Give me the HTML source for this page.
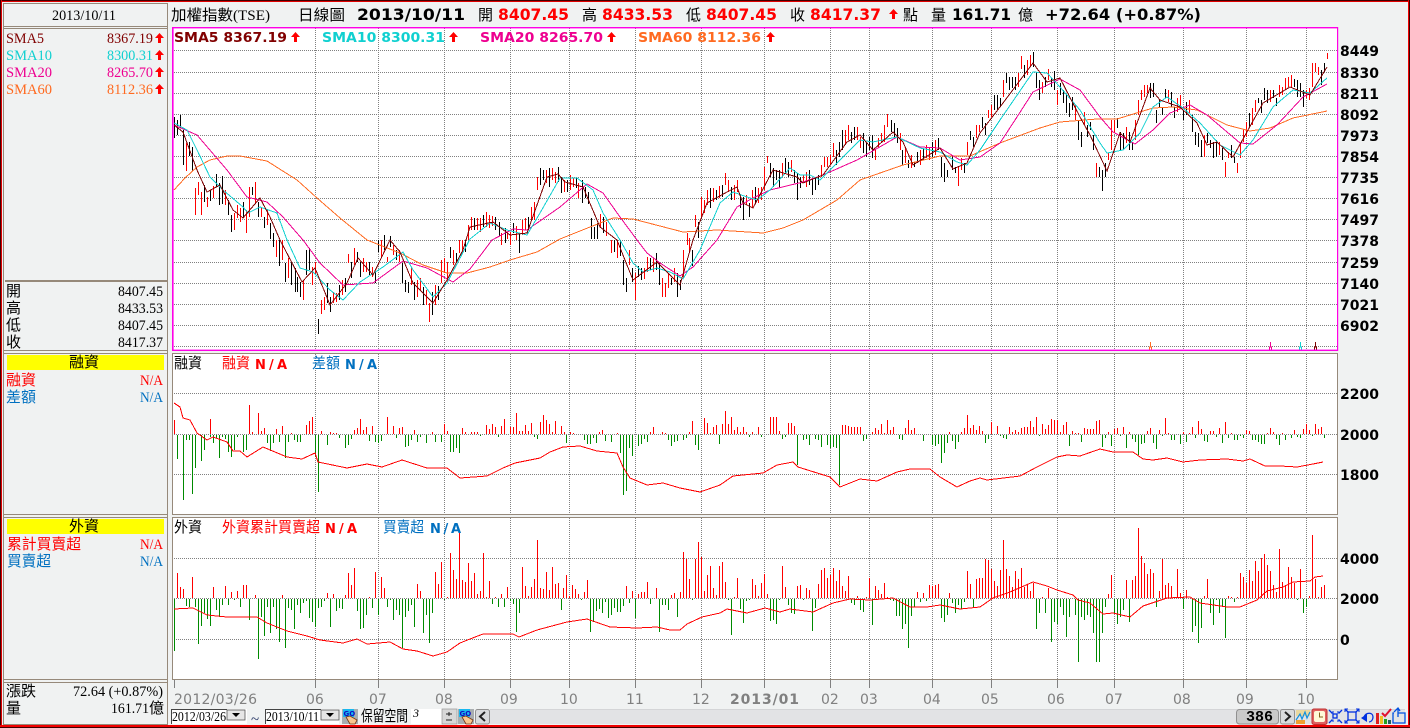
<!DOCTYPE html>
<html><head><meta charset="utf-8"><title>加權指數</title>
<style>
html,body{margin:0;padding:0;background:#f0f2f2;width:1410px;height:728px;overflow:hidden}
svg{display:block}
text{font-family:"Liberation Serif","Noto Sans CJK TC",serif;font-size:15px}
.c{font-family:"Liberation Sans","Noto Sans CJK TC",sans-serif;font-size:15px}
.b{font-family:"DejaVu Sans",sans-serif;font-weight:bold;font-size:16px}
.l{font-family:"DejaVu Sans",sans-serif;font-weight:bold;font-size:13px}
.y{font-family:"DejaVu Sans",sans-serif;font-weight:bold;font-size:14px;fill:#000}
.x{font-family:"DejaVu Sans",sans-serif;font-size:14px;fill:#808080}
.ln{fill:none;stroke-width:1;shape-rendering:crispEdges}
.t{fill:#96897a}
</style></head><body>
<svg xmlns="http://www.w3.org/2000/svg" width="1410" height="728" viewBox="0 0 1410 728">
<defs><path id="a" d="M4.5 0L9 5H6V10H3V5H0Z" fill="#ff0000"/>
<g id="go"><rect width="16" height="15" fill="#a8aeb0"/><rect x="1" y="0" width="11" height="8" fill="#18b8f0"/><text x="1.5" y="7" style="font-family:'DejaVu Sans',sans-serif;font-size:7px;font-weight:bold" fill="#1010c0">GO</text><path d="M4 8L8 7L15 11L13 15H8Z" fill="#f8c890" stroke="#703010" stroke-width=".8"/></g></defs>

<rect width="1410" height="728" fill="#f0f2f2"/>
<rect x="0" y="0" width="1410" height="1" fill="#400000"/><rect x="0" y="1" width="1410" height="1" fill="#e00000"/>
<rect x="0" y="0" width="1" height="728" fill="#400000"/><rect x="1" y="0" width="1" height="728" fill="#e00000"/>
<rect x="1409" y="0" width="1" height="728" fill="#400000"/><rect x="1408" y="0" width="1" height="728" fill="#f00000"/>
<rect x="0" y="727" width="1410" height="1" fill="#400000"/><rect x="0" y="725" width="1410" height="2" fill="#f00000"/>

<g class="t">
<rect x="3" y="3" width="165" height="1"/><rect x="3" y="3" width="1" height="722"/><rect x="167" y="3" width="1" height="722"/>
<rect x="3" y="26" width="165" height="1"/><rect x="3" y="28" width="165" height="1"/>
<rect x="5" y="280" width="162" height="2"/>
<rect x="3" y="350" width="165" height="1"/><rect x="3" y="353" width="165" height="1"/>
<rect x="3" y="514" width="165" height="1"/><rect x="3" y="517" width="165" height="1"/>
<rect x="3" y="679" width="165" height="1"/><rect x="3" y="682" width="165" height="1"/>
<rect x="3" y="724" width="165" height="1"/>
</g>

<text x="52" y="20" textLength="64" lengthAdjust="spacingAndGlyphs">2013/10/11</text>
<g fill="#800000"><text x="6" y="43" textLength="38" lengthAdjust="spacingAndGlyphs">SMA5</text><text x="107" y="43" textLength="46" lengthAdjust="spacingAndGlyphs">8367.19</text></g>
<g fill="#10d0d0"><text x="6" y="60" textLength="46" lengthAdjust="spacingAndGlyphs">SMA10</text><text x="107" y="60" textLength="46" lengthAdjust="spacingAndGlyphs">8300.31</text></g>
<g fill="#ee0090"><text x="6" y="77" textLength="46" lengthAdjust="spacingAndGlyphs">SMA20</text><text x="107" y="77" textLength="46" lengthAdjust="spacingAndGlyphs">8265.70</text></g>
<g fill="#ff6a20"><text x="6" y="94" textLength="46" lengthAdjust="spacingAndGlyphs">SMA60</text><text x="107" y="94" textLength="46" lengthAdjust="spacingAndGlyphs">8112.36</text></g>
<use href="#a" x="155" y="33"/><use href="#a" x="155" y="50"/><use href="#a" x="155" y="67"/><use href="#a" x="155" y="84"/>

<text class="c" x="6" y="296">開</text><text x="118" y="296" textLength="45" lengthAdjust="spacingAndGlyphs">8407.45</text>
<text class="c" x="6" y="313">高</text><text x="118" y="313" textLength="45" lengthAdjust="spacingAndGlyphs">8433.53</text>
<text class="c" x="6" y="330">低</text><text x="118" y="330" textLength="45" lengthAdjust="spacingAndGlyphs">8407.45</text>
<text class="c" x="6" y="347">收</text><text x="118" y="347" textLength="45" lengthAdjust="spacingAndGlyphs">8417.37</text>

<rect x="7" y="355" width="157" height="15" fill="#ffff00"/>
<text class="c" x="69" y="367">融資</text>
<text class="c" x="6" y="385" fill="#ff0000">融資</text><text x="140" y="385" textLength="23" lengthAdjust="spacingAndGlyphs" fill="#ff0000">N/A</text>
<text class="c" x="6" y="402" fill="#0070c0">差額</text><text x="140" y="402" textLength="23" lengthAdjust="spacingAndGlyphs" fill="#0070c0">N/A</text>

<rect x="7" y="519" width="157" height="15" fill="#ffff00"/>
<text class="c" x="69" y="531">外資</text>
<text class="c" x="7" y="549" fill="#ff0000" textLength="74" lengthAdjust="spacingAndGlyphs">累計買賣超</text><text x="140" y="549" textLength="23" lengthAdjust="spacingAndGlyphs" fill="#ff0000">N/A</text>
<text class="c" x="7" y="566" fill="#0070c0" textLength="44" lengthAdjust="spacingAndGlyphs">買賣超</text><text x="140" y="566" textLength="23" lengthAdjust="spacingAndGlyphs" fill="#0070c0">N/A</text>

<text class="c" x="6" y="696">漲跌</text><text x="73" y="696" textLength="90" lengthAdjust="spacingAndGlyphs">72.64 (+0.87%)</text>
<text class="c" x="6" y="713">量</text><text x="111" y="713" textLength="38" lengthAdjust="spacingAndGlyphs">161.71</text><text class="c" x="149" y="713">億</text>

<text class="c" x="171" y="20" textLength="62" lengthAdjust="spacingAndGlyphs">加權指數</text><text x="233" y="20" textLength="37" lengthAdjust="spacingAndGlyphs">(TSE)</text>
<text class="c" x="298" y="20" textLength="47" lengthAdjust="spacingAndGlyphs">日線圖</text>
<text class="b" x="357" y="20" textLength="108" lengthAdjust="spacingAndGlyphs">2013/10/11</text>
<text class="c" x="478" y="20">開</text><text class="b" x="498" y="20" textLength="71" lengthAdjust="spacingAndGlyphs" fill="#ff0000">8407.45</text>
<text class="c" x="582" y="20">高</text><text class="b" x="602" y="20" textLength="71" lengthAdjust="spacingAndGlyphs" fill="#ff0000">8433.53</text>
<text class="c" x="686" y="20">低</text><text class="b" x="706" y="20" textLength="71" lengthAdjust="spacingAndGlyphs" fill="#ff0000">8407.45</text>
<text class="c" x="790" y="20">收</text><text class="b" x="810" y="20" textLength="71" lengthAdjust="spacingAndGlyphs" fill="#ff0000">8417.37</text>
<use href="#a" x="889" y="9"/>
<text class="c" x="903" y="20">點</text><text class="c" x="931" y="20">量</text>
<text class="b" x="952" y="20" textLength="59" lengthAdjust="spacingAndGlyphs">161.71</text>
<text class="c" x="1018" y="20">億</text>
<text class="b" x="1045" y="20" textLength="156" lengthAdjust="spacingAndGlyphs">+72.64 (+0.87%)</text>

<rect x="172" y="27" width="1166" height="324" fill="#fff"/>
<rect x="172" y="353" width="1166" height="162" fill="#fff"/>
<rect x="172" y="517" width="1166" height="163" fill="#fff"/>

<path fill="none" stroke="#808080" stroke-width="1" stroke-dasharray="1 1" shape-rendering="crispEdges" d="M174 50.5H1337M174 72.5H1337M174 93.5H1337M174 114.5H1337M174 135.5H1337M174 156.5H1337M174 177.5H1337M174 198.5H1337M174 219.5H1337M174 240.5H1337M174 262.5H1337M174 283.5H1337M174 304.5H1337M174 325.5H1337M174 346.5H1337M174 393.5H1337M174 434.5H1337M174 474.5H1337M174 558.5H1337M174 598.5H1337M174 639.5H1337
M315.5 28V680M378.5 28V680M444.5 28V680M510.5 28V680M569.5 28V680M635.5 28V680M701.5 28V680M764.5 28V680M830.5 28V680M869.5 28V680M932.5 28V680M991.5 28V680M1057.5 28V680M1114.5 28V680M1183.5 28V680M1246.5 28V680M1306.5 28V680"/>
<path fill="none" stroke="#808080" shape-rendering="crispEdges" d="M174.5 680V688M315.5 680V688M378.5 680V688M444.5 680V688M510.5 680V688M569.5 680V688M635.5 680V688M701.5 680V688M764.5 680V688M830.5 680V688M869.5 680V688M932.5 680V688M991.5 680V688M1057.5 680V688M1114.5 680V688M1183.5 680V688M1246.5 680V688M1306.5 680V688"/>
<rect x="168" y="351" width="1170" height="2" fill="#f0f2f2"/><rect x="168" y="515" width="1170" height="2" fill="#f0f2f2"/>

<g transform="translate(.5 0)" fill="none" shape-rendering="crispEdges">
<!-- price bars: black -->
<path stroke="#000" d="M174 117V138M177 120V135M180 115V128M183 130V165M189 142V156M192 147V171M204 185V202M210 190V201M216 174V187M219 183V205M222 176V204M228 200V215M231 215V232M243 202V218M252 187V195M258 202V217M264 217V228M270 223V239M273 233V247M279 240V266M285 263V282M291 262V285M295 268V292M297 277V292M300 282V297M306 250V275M309 248V270M318 319V334M327 283V303M330 297V312M339 285V300M345 278V292M351 262V278M357 252V262M360 262V277M369 262V275M375 272V283M378 240V252M384 235V250M390 236V247M396 250V260M402 263V283M405 280V292M408 282V293M414 282V300M423 287V305M432 292V315M438 286V300M450 247V258M456 253V263M465 240V252M474 218V230M483 215V227M495 217V230M499 222V236M505 228V243M513 223V233M519 233V253M528 217V230M540 168V185M543 170V180M549 168V187M558 167V182M561 177V193M567 180V192M576 178V188M582 180V203M585 187V198M588 192V204M591 218V239M594 227V239M597 223V239M603 217V233M614 240V252M620 240V256M623 260V285M626 278V292M632 268V282M638 266V277M641 268V280M650 258V270M656 253V270M659 262V285M671 278V285M677 273V297M680 280V290M692 250V266M698 222V238M710 188V208M716 190V200M722 185V197M731 187V200M740 197V208M743 197V220M749 203V217M755 187V203M770 163V177M773 168V187M776 170V180M779 170V188M785 158V173M788 162V177M794 170V183M797 173V200M800 177V188M809 170V185M812 178V195M815 177V190M818 175V185M836 150V165M839 142V157M842 130V150M851 132V143M854 127V140M863 133V153M866 143V157M869 137V150M872 135V158M891 120V132M894 123V137M897 128V143M902 150V165M908 160V168M914 162V167M917 152V163M923 148V160M932 142V157M938 138V150M941 157V177M944 163V182M947 170V177M952 155V170M955 167V173M964 163V173M970 131V140M973 137V147M982 117V128M985 123V135M994 95V110M997 95V110M1000 98V107M1006 73V83M1009 77V90M1012 77V88M1015 77V90M1024 65V78M1033 52V67M1036 72V88M1039 80V100M1045 77V87M1051 78V87M1054 71V90M1060 83V95M1063 90V103M1066 95V113M1069 103V117M1072 97V110M1078 120V140M1081 132V147M1087 125V137M1090 122V130M1093 135V150M1099 167V177M1102 170V191M1105 163V177M1117 118V128M1120 132V150M1123 133V150M1129 132V150M1132 142V150M1150 83V98M1153 83V97M1156 110V123M1159 100V107M1162 107V115M1165 89V98M1171 92V107M1174 107V118M1183 110V120M1186 102V115M1192 115V132M1195 132V145M1198 133V147M1201 140V157M1207 133V143M1210 140V148M1213 142V158M1216 140V157M1222 148V160M1231 145V158M1234 157V163M1249 113V128M1258 98V103M1261 100V113M1264 88V100M1267 90V103M1273 90V98M1276 98V106M1294 79V87M1297 80V97M1300 83V97M1303 90V107M1321 70V85M1324 63V72"/>
<!-- price bars: red -->
<path stroke="#f00" d="M186 143V171M195 188V215M198 182V195M201 192V215M207 197V207M213 186V198M225 190V205M234 213V230M237 205V218M240 208V222M246 210V233M249 187V217M255 182V203M261 207V217M267 210V225M276 240V257M282 240V260M288 258V278M303 280V300M312 267V285M315 262V275M321 300V314M324 297V310M333 292V303M336 293V302M342 280V295M348 254V263M354 248V265M363 258V272M366 262V272M372 267V277M381 240V258M387 257V262M393 245V255M399 250V262M411 268V285M417 280V297M420 278V290M426 290V305M429 303V322M435 285V305M441 260V283M444 258V273M447 262V282M453 250V265M459 240V253M462 240V252M468 225V240M471 217V230M477 218V230M480 218V232M486 212V227M489 215V228M492 216V226M501 233V245M507 233V239M510 232V245M516 226V240M522 220V235M525 218V230M531 207V220M534 202V220M537 177V190M546 170V183M552 168V180M555 172V183M564 180V192M570 175V190M573 178V187M578 183V198M600 214V228M606 222V236M611 240V253M617 240V258M629 250V265M635 273V300M644 268V279M647 257V272M653 258V272M662 278V297M665 283V297M668 273V288M674 268V282M683 250V278M687 233V245M689 238V252M695 215V227M701 197V217M704 200V213M707 190V205M713 188V202M719 186V198M725 173V185M728 180V192M734 185V200M737 180V192M746 195V205M752 190V208M758 188V203M761 187V200M764 167V190M767 156V163M782 163V177M791 160V172M803 175V183M806 172V187M821 165V177M824 157V167M827 157V167M830 155V165M833 143V157M845 130V145M848 125V140M857 127V140M860 137V148M875 150V160M878 138V148M881 133V142M884 125V142M887 114V127M900 133V150M905 148V163M911 155V168M920 150V165M926 145V158M929 147V160M935 140V155M958 167V186M961 158V170M967 142V155M976 125V138M979 125V132M988 110V118M991 105V117M1003 80V97M1018 73V87M1021 56V69M1027 60V75M1030 55V67M1042 82V93M1048 69V80M1057 90V105M1075 105V120M1084 112V125M1096 163V177M1108 153V160M1111 120V150M1114 120V133M1126 127V143M1135 120V140M1138 100V115M1141 90V100M1144 85V97M1147 85V93M1168 90V102M1177 98V112M1180 95V108M1189 100V113M1204 135V157M1219 142V155M1225 162V177M1228 152V158M1237 163V173M1240 143V158M1243 130V142M1246 122V137M1252 108V125M1255 100V112M1270 90V102M1279 85V97M1282 87V95M1285 78V90M1288 77V87M1291 75V87M1306 90V98M1309 88V100M1312 63V87M1315 63V72M1318 67V75M1327 53V59"/>
<!-- panel 2 -->
<path stroke="#f00" d="M174 434V420M210 434V419M249 434V405M252 434V432M258 434V413M261 434V431M264 434V428M276 434V429M282 434V426M291 434V433M306 434V425M309 434V421M312 434V417M321 434V431M330 434V432M333 434V433M336 434V433M354 434V430M357 434V428M360 434V419M363 434V430M366 434V427M372 434V426M387 434V417M393 434V426M399 434V428M402 434V427M414 434V430M432 434V432M444 434V424M447 434V431M462 434V428M465 434V432M471 434V432M474 434V432M477 434V432M486 434V425M489 434V429M492 434V424M495 434V427M501 434V426M504 434V419M510 434V427M513 434V427M516 434V413M519 434V431M522 434V431M525 434V425M528 434V431M531 434V423M540 434V422M543 434V415M546 434V420M549 434V424M552 434V432M555 434V421M561 434V426M564 434V432M570 434V432M573 434V433M599 434V432M602 434V430M617 434V433M650 434V432M653 434V427M662 434V432M665 434V433M689 434V432M692 434V421M704 434V418M707 434V423M710 434V433M713 434V427M716 434V425M722 434V424M725 434V411M728 434V424M731 434V417M734 434V430M737 434V427M740 434V432M743 434V427M746 434V432M752 434V432M758 434V427M770 434V417M773 434V417M776 434V417M779 434V431M788 434V423M791 434V423M794 434V426M842 434V425M845 434V425M848 434V426M851 434V427M854 434V427M857 434V427M860 434V427M872 434V432M875 434V428M878 434V430M881 434V424M884 434V433M887 434V420M890 434V430M893 434V427M905 434V428M908 434V420M911 434V430M914 434V428M949 434V432M961 434V432M964 434V428M967 434V415M970 434V428M973 434V425M976 434V430M979 434V426M982 434V431M991 434V422M997 434V426M1009 434V427M1012 434V432M1015 434V430M1018 434V432M1021 434V428M1024 434V427M1027 434V427M1030 434V421M1033 434V427M1036 434V417M1042 434V424M1045 434V429M1048 434V425M1051 434V419M1054 434V420M1057 434V420M1060 434V432M1063 434V425M1066 434V422M1072 434V431M1075 434V433M1078 434V433M1084 434V428M1087 434V429M1090 434V429M1093 434V429M1096 434V421M1099 434V420M1108 434V432M1114 434V429M1117 434V428M1123 434V427M1129 434V432M1147 434V431M1150 434V428M1159 434V430M1165 434V418M1168 434V433M1183 434V432M1189 434V433M1192 434V427M1198 434V421M1201 434V429M1210 434V431M1213 434V431M1219 434V428M1225 434V422M1231 434V433M1246 434V430M1249 434V431M1267 434V433M1270 434V428M1273 434V432M1282 434V433M1294 434V430M1303 434V429M1306 434V424M1309 434V430M1315 434V424M1318 434V429M1321 434V427"/>
<path stroke="#008a00" d="M177 435V459M183 435V500M186 435V440M189 435V440M192 435V494M195 435V468M201 435V461M204 435V450M210 435V437M213 435V443M216 435V438M219 435V458M222 435V437M225 435V439M228 435V452M231 435V457M234 435V450M237 435V437M243 435V452M246 435V450M267 435V443M270 435V451M273 435V443M279 435V442M285 435V458M288 435V442M294 435V440M297 435V442M300 435V442M315 435V457M318 435V492M327 435V445M339 435V438M345 435V448M348 435V445M351 435V439M369 435V441M375 435V442M378 435V443M381 435V441M396 435V438M405 435V447M408 435V446M411 435V440M417 435V442M420 435V437M426 435V443M435 435V442M441 435V442M450 435V452M453 435V452M456 435V448M459 435V453M480 435V436M498 435V437M534 435V437M537 435V439M566 435V443M584 435V440M587 435V444M590 435V444M593 435V438M596 435V443M605 435V441M611 435V442M620 435V453M623 435V495M626 435V491M629 435V448M632 435V456M638 435V446M641 435V444M644 435V439M647 435V442M668 435V440M671 435V446M674 435V442M677 435V441M683 435V440M686 435V438M695 435V445M698 435V450M719 435V444M749 435V437M761 435V437M782 435V439M785 435V437M797 435V465M803 435V440M806 435V439M809 435V445M815 435V439M818 435V440M821 435V447M827 435V445M830 435V448M833 435V447M836 435V448M839 435V485M863 435V441M866 435V439M899 435V439M902 435V440M923 435V441M932 435V445M935 435V446M938 435V444M941 435V463M944 435V453M947 435V443M952 435V441M955 435V449M958 435V442M985 435V443M988 435V439M994 435V435M1000 435V436M1003 435V438M1006 435V439M1039 435V436M1069 435V446M1081 435V442M1102 435V447M1105 435V438M1111 435V446M1120 435V436M1126 435V448M1132 435V439M1135 435V442M1138 435V455M1141 435V444M1144 435V443M1153 435V443M1156 435V449M1162 435V436M1171 435V440M1174 435V440M1180 435V444M1186 435V442M1195 435V438M1204 435V441M1207 435V442M1216 435V437M1222 435V443M1228 435V438M1234 435V440M1237 435V440M1240 435V436M1243 435V438M1252 435V440M1255 435V440M1258 435V442M1261 435V444M1264 435V444M1276 435V439M1279 435V445M1285 435V440M1291 435V438M1297 435V437M1300 435V438M1312 435V436M1324 435V438"/>
<!-- panel 3 -->
<path stroke="#f00" d="M177 598V573M180 598V587M183 598V589M192 598V577M213 598V587M225 598V586M231 598V592M237 598V591M243 598V585M246 598V585M255 598V595M282 598V595M327 598V593M333 598V594M345 598V595M348 598V573M351 598V585M354 598V568M369 598V597M375 598V572M381 598V577M384 598V588M417 598V584M420 598V591M435 598V572M438 598V584M441 598V562M447 598V597M450 598V553M453 598V570M456 598V579M459 598V533M462 598V580M465 598V582M468 598V563M471 598V581M474 598V573M477 598V594M480 598V591M483 598V553M486 598V597M489 598V581M495 598V597M501 598V594M507 598V587M522 598V567M525 598V586M528 598V596M531 598V587M534 598V579M537 598V540M540 598V588M543 598V589M546 598V572M549 598V590M552 598V567M555 598V584M558 598V583M563 598V588M566 598V575M569 598V596M572 598V585M575 598V589M578 598V594M584 598V592M587 598V580M626 598V586M632 598V591M638 598V594M641 598V592M644 598V592M647 598V582M656 598V588M671 598V595M674 598V593M680 598V592M683 598V552M686 598V559M689 598V579M695 598V559M698 598V542M701 598V557M704 598V591M707 598V575M710 598V566M713 598V588M716 598V595M719 598V566M722 598V562M725 598V582M734 598V597M737 598V578M752 598V579M755 598V585M758 598V596M761 598V583M764 598V574M767 598V594M782 598V566M785 598V587M797 598V586M800 598V585M806 598V588M809 598V590M818 598V584M821 598V570M824 598V568M827 598V578M830 598V575M833 598V568M836 598V581M839 598V570M842 598V586M845 598V591M848 598V576M857 598V596M866 598V597M869 598V578M875 598V586M878 598V590M881 598V594M884 598V583M887 598V597M917 598V592M923 598V593M929 598V585M932 598V586M935 598V585M938 598V584M949 598V593M967 598V571M970 598V584M976 598V579M979 598V578M982 598V578M985 598V559M988 598V560M991 598V569M994 598V581M997 598V586M1000 598V570M1003 598V540M1006 598V569M1009 598V576M1012 598V587M1015 598V571M1018 598V579M1021 598V568M1024 598V587M1027 598V585M1030 598V591M1033 598V583M1042 598V597M1048 598V588M1108 598V594M1111 598V575M1126 598V580M1132 598V580M1135 598V576M1138 598V528M1141 598V556M1144 598V563M1147 598V574M1150 598V569M1153 598V573M1159 598V591M1162 598V559M1165 598V585M1168 598V583M1171 598V586M1177 598V569M1180 598V593M1186 598V590M1204 598V596M1207 598V579M1228 598V596M1231 598V597M1237 598V597M1240 598V573M1243 598V577M1246 598V583M1249 598V570M1252 598V581M1255 598V561M1258 598V571M1261 598V558M1264 598V554M1267 598V565M1270 598V571M1273 598V585M1276 598V592M1279 598V549M1282 598V582M1285 598V585M1288 598V567M1291 598V577M1294 598V583M1300 598V569M1309 598V596M1312 598V535M1315 598V579M1318 598V597M1321 598V587M1324 598V585"/>
<path stroke="#008a00" d="M174 599V651M186 599V606M189 599V607M195 599V607M198 599V644M201 599V626M204 599V613M207 599V619M210 599V626M216 599V610M219 599V617M222 599V605M228 599V605M234 599V600M240 599V607M249 599V620M258 599V659M261 599V617M264 599V636M267 599V607M270 599V633M273 599V607M276 599V629M279 599V642M285 599V648M288 599V608M291 599V610M294 599V629M297 599V605M300 599V613M303 599V603M306 599V601M309 599V618M312 599V622M315 599V627M318 599V608M321 599V607M324 599V601M330 599V627M336 599V611M339 599V608M342 599V609M357 599V611M360 599V629M363 599V628M366 599V615M372 599V608M378 599V615M387 599V607M390 599V600M393 599V620M396 599V610M399 599V615M402 599V648M405 599V617M408 599V611M411 599V605M414 599V627M423 599V633M426 599V615M429 599V643M432 599V613M444 599V600M492 599V604M498 599V607M504 599V607M510 599V601M513 599V604M516 599V632M519 599V613M561 599V610M581 599V600M590 599V632M593 599V622M596 599V611M599 599V609M602 599V613M605 599V602M608 599V618M611 599V615M614 599V608M617 599V612M620 599V612M623 599V606M629 599V603M635 599V618M650 599V604M659 599V632M662 599V605M665 599V605M668 599V610M677 599V617M692 599V600M728 599V600M731 599V635M740 599V609M743 599V623M746 599V601M749 599V600M770 599V621M773 599V620M776 599V624M779 599V600M788 599V605M791 599V613M794 599V614M803 599V600M812 599V631M815 599V608M851 599V603M854 599V605M860 599V610M863 599V612M872 599V625M890 599V600M893 599V601M896 599V616M899 599V616M902 599V629M905 599V624M908 599V648M911 599V616M914 599V607M920 599V602M926 599V601M941 599V618M944 599V622M947 599V615M952 599V603M955 599V613M958 599V605M961 599V609M964 599V602M973 599V608M1036 599V629M1039 599V613M1045 599V613M1051 599V642M1054 599V622M1057 599V624M1060 599V607M1063 599V615M1066 599V637M1069 599V617M1075 599V615M1078 599V662M1081 599V617M1084 599V620M1087 599V615M1090 599V617M1093 599V633M1096 599V662M1099 599V662M1102 599V633M1105 599V607M1114 599V613M1117 599V624M1120 599V617M1123 599V610M1129 599V622M1156 599V607M1183 599V609M1192 599V632M1195 599V626M1198 599V643M1201 599V628M1210 599V613M1213 599V625M1216 599V600M1219 599V613M1222 599V607M1225 599V638M1234 599V602M1297 599V600M1303 599V613M1306 599V607"/>
</g>

<polyline class="ln" stroke="#ff6a20" points="174,190 185,178 197,167 210,160 227,156 240,156 267,161 297,180 317,198 340,218 367,240 400,253 423,265 447,273 467,273 490,267 510,260 537,252 560,239 590,227 613,218 633,219 683,232 717,230 763,233 783,228 803,220 837,200 860,180 903,165 940,156 970,156 1000,143 1040,128 1060,122 1097,119 1117,119 1153,108 1173,107 1197,110 1227,125 1250,131 1270,128 1293,118 1327,111"/>
<polyline class="ln" stroke="#ee0090" points="174,125 197,135 227,170 247,197 267,202 283,217 303,240 320,263 343,285 373,283 403,261 427,268 453,282 470,269 483,252 492,240 513,229 527,230 560,207 587,184 603,193 620,217 637,240 647,253 660,263 680,276 693,267 717,240 737,207 753,198 770,190 803,182 823,175 857,160 897,137 920,147 940,148 960,160 980,157 1000,143 1017,117 1033,92 1060,79 1080,90 1100,117 1113,132 1135,144 1153,130 1170,113 1190,105 1207,115 1240,143 1253,144 1277,125 1303,97 1327,84"/>
<polyline class="ln" stroke="#10d0d0" points="174,123 187,130 197,150 210,177 223,190 243,207 248,213 260,207 277,213 287,240 300,268 313,272 330,290 343,300 360,282 383,267 403,252 413,270 433,297 447,283 470,239 490,223 507,230 527,235 540,213 560,178 577,178 593,190 603,213 620,240 633,263 643,272 657,268 670,272 683,279 700,250 720,203 733,192 747,197 757,200 770,190 790,168 800,175 810,175 820,180 833,167 860,140 873,142 897,137 920,148 940,152 957,162 967,165 980,150 1000,120 1033,72 1047,73 1060,87 1080,110 1100,143 1107,153 1123,150 1140,133 1153,107 1167,97 1183,108 1200,123 1220,145 1240,155 1253,140 1273,107 1293,90 1310,93 1327,78"/>
<polyline class="ln" stroke="#800000" points="174,125 183,132 197,170 207,192 220,185 233,210 243,218 260,198 270,217 280,240 302,282 315,268 330,305 347,283 358,258 373,275 390,240 400,252 413,283 433,303 447,280 463,250 470,227 493,222 510,235 527,233 547,177 558,174 565,182 583,187 600,227 617,240 633,280 657,262 680,285 693,240 707,203 727,192 737,187 743,203 753,208 773,170 797,177 803,183 823,175 847,142 860,135 873,150 893,132 903,142 913,165 940,148 953,169 967,163 980,133 1003,103 1033,63 1047,82 1060,78 1080,117 1090,135 1107,171 1120,133 1130,142 1150,88 1160,100 1180,107 1197,123 1207,145 1217,142 1233,157 1263,103 1290,87 1310,95 1327,67"/>
<polyline class="ln" stroke="#f00" points="174,403 180,407 183,418 190,420 197,433 207,440 213,437 227,442 233,451 240,451 247,457 263,447 287,457 302,459 315,453 318,462 347,468 367,464 382,467 402,460 427,468 447,468 460,478 487,476 503,468 515,463 540,458 550,452 563,447 580,446 597,451 617,453 623,467 630,478 647,485 663,483 680,488 700,492 720,485 733,476 763,473 777,465 793,462 798,467 830,477 840,487 860,479 877,481 897,472 910,469 930,469 940,477 957,487 970,481 980,478 987,480 1020,476 1037,467 1057,457 1067,455 1080,456 1100,449 1113,452 1133,452 1143,459 1153,460 1167,458 1183,462 1200,460 1227,459 1243,461 1250,459 1265,466 1280,466 1297,467 1313,464 1323,462"/>
<polyline class="ln" stroke="#f00" points="174,609 193,608 207,615 227,617 257,617 267,623 287,631 307,636 320,640 343,643 357,639 367,644 390,642 403,649 417,651 433,656 447,652 460,643 470,639 483,634 513,634 519,637 537,630 567,622 587,619 610,627 637,628 657,627 670,630 680,630 687,624 702,617 720,613 727,609 747,613 765,608 780,612 790,609 813,612 833,603 850,599 870,600 893,598 910,607 927,607 940,605 960,609 980,607 993,598 1010,592 1033,582 1047,586 1057,590 1073,595 1078,600 1090,603 1103,614 1113,613 1130,617 1143,606 1167,598 1190,597 1200,603 1227,607 1240,607 1257,600 1267,591 1283,587 1293,582 1310,581 1315,577 1323,576"/>

<g fill="none" shape-rendering="crispEdges">
<path stroke="#ff6a20" d="M1150.5 342V347M1149.5 350V347H1151.5V350"/>
<path stroke="#ee0090" d="M1270.5 342V347M1269.5 350V347H1271.5V350"/>
<path stroke="#10d0d0" d="M1300.5 342V347M1299.5 350V347H1301.5V350"/>
<path stroke="#800000" d="M1315.5 342V347M1314.5 350V347H1316.5V350"/>
</g>

<g fill="#ff00e6">
<rect x="172" y="27" width="1166" height="1.4"/><rect x="172" y="349.6" width="1166" height="1.4"/>
<rect x="172" y="27" width="1.6" height="324"/><rect x="1337" y="27" width="1.2" height="324"/>
</g>
<g class="t">
<rect x="172" y="353" width="1166" height="1"/><rect x="172" y="514" width="1166" height="1"/><rect x="172" y="353" width="1" height="162"/><rect x="1337" y="353" width="1" height="162"/>
<rect x="172" y="517" width="1166" height="1"/><rect x="172" y="679" width="1166" height="1"/><rect x="172" y="517" width="1" height="163"/><rect x="1337" y="517" width="1" height="163"/>
</g>

<text class="l" x="174" y="42" textLength="113" lengthAdjust="spacingAndGlyphs" fill="#800000">SMA5 8367.19</text>
<text class="l" x="322" y="42" textLength="123" lengthAdjust="spacingAndGlyphs" fill="#10d0d0">SMA10 8300.31</text>
<text class="l" x="480" y="42" textLength="123" lengthAdjust="spacingAndGlyphs" fill="#ee0090">SMA20 8265.70</text>
<text class="l" x="638" y="42" textLength="123" lengthAdjust="spacingAndGlyphs" fill="#ff6a20">SMA60 8112.36</text>
<use href="#a" x="291" y="32"/><use href="#a" x="449" y="32"/><use href="#a" x="607" y="32"/><use href="#a" x="766" y="32"/>

<text class="c" x="174" y="368" textLength="28" lengthAdjust="spacingAndGlyphs">融資</text>
<text class="c" x="222" y="368" textLength="28" lengthAdjust="spacingAndGlyphs" fill="#ff0000">融資</text>
<text class="l" x="255" y="369" textLength="32" fill="#ff0000">N/A</text>
<text class="c" x="312" y="368" textLength="28" lengthAdjust="spacingAndGlyphs" fill="#0070c0">差額</text>
<text class="l" x="345" y="369" textLength="32" fill="#0070c0">N/A</text>

<text class="c" x="174" y="532" textLength="28" lengthAdjust="spacingAndGlyphs">外資</text>
<text class="c" x="222" y="532" textLength="98" lengthAdjust="spacingAndGlyphs" fill="#ff0000">外資累計買賣超</text>
<text class="l" x="325" y="533" textLength="32" fill="#ff0000">N/A</text>
<text class="c" x="383" y="532" textLength="41" lengthAdjust="spacingAndGlyphs" fill="#0070c0">買賣超</text>
<text class="l" x="430" y="533" textLength="31" fill="#0070c0">N/A</text>

<text class="y" x="1340" y="56">8449</text><text class="y" x="1340" y="78">8330</text><text class="y" x="1340" y="99">8211</text><text class="y" x="1340" y="120">8092</text><text class="y" x="1340" y="141">7973</text><text class="y" x="1340" y="162">7854</text><text class="y" x="1340" y="183">7735</text><text class="y" x="1340" y="204">7616</text><text class="y" x="1340" y="225">7497</text><text class="y" x="1340" y="246">7378</text><text class="y" x="1340" y="268">7259</text><text class="y" x="1340" y="289">7140</text><text class="y" x="1340" y="310">7021</text><text class="y" x="1340" y="331">6902</text>
<text class="y" x="1340" y="399">2200</text><text class="y" x="1340" y="440">2000</text><text class="y" x="1340" y="480">1800</text>
<text class="y" x="1340" y="564">4000</text><text class="y" x="1340" y="604">2000</text><text class="y" x="1340" y="645">0</text>

<text class="x" x="174" y="704" textLength="83">2012/03/26</text>
<text class="x" x="306" y="704">06</text><text class="x" x="369" y="704">07</text><text class="x" x="435" y="704">08</text><text class="x" x="500" y="704">09</text><text class="x" x="560" y="704">10</text><text class="x" x="626" y="704">11</text><text class="x" x="692" y="704">12</text>
<text class="x" x="730" y="704" textLength="69" style="font-weight:bold">2013/01</text>
<text class="x" x="821" y="704">02</text><text class="x" x="860" y="704">03</text><text class="x" x="923" y="704">04</text><text class="x" x="981" y="704">05</text><text class="x" x="1047" y="704">06</text><text class="x" x="1105" y="704">07</text><text class="x" x="1173" y="704">08</text><text class="x" x="1236" y="704">09</text><text class="x" x="1297" y="704">10</text>

<rect x="490" y="709" width="915" height="15" fill="#e2e3e5"/><rect x="490" y="709" width="915" height="1" fill="#d4d5d7"/>

<rect x="171" y="709" width="76" height="15" fill="#fff"/><path d="M171.5 724V709.5H227" fill="none" stroke="#444" shape-rendering="crispEdges"/>
<text x="172" y="721" textLength="54" lengthAdjust="spacingAndGlyphs" style="font-size:14px">2012/03/26</text>
<rect x="227" y="710" width="18" height="10" fill="#e6e6e6" stroke="#555" stroke-width=".8"/><path d="M232 713H240L236 717Z" fill="#000"/>
<text x="251" y="724" fill="#203060" style="font-size:15px">~</text>
<rect x="265" y="709" width="74" height="15" fill="#fff"/><path d="M265.5 724V709.5H321" fill="none" stroke="#444" shape-rendering="crispEdges"/>
<text x="266" y="721" textLength="53" lengthAdjust="spacingAndGlyphs" style="font-size:14px">2013/10/11</text>
<rect x="321" y="710" width="18" height="10" fill="#e6e6e6" stroke="#555" stroke-width=".8"/><path d="M326 713H334L330 717Z" fill="#000"/>
<use href="#go" x="342" y="709"/>
<text class="c" x="361" y="721" textLength="47" lengthAdjust="spacingAndGlyphs">保留空間</text>
<rect x="411" y="709" width="31" height="15" fill="#fff"/>
<text x="413" y="717" style="font-size:12px;font-style:italic">3</text>
<rect x="442" y="709" width="15" height="15" fill="#d8d8d8" stroke="#888" stroke-width=".6"/><path d="M446 714H452M446 720H452M449 712V716" stroke="#222" stroke-width="1" shape-rendering="crispEdges"/>
<use href="#go" x="458" y="709"/>
<rect x="475.5" y="709.5" width="14" height="14.5" rx="2" fill="#d9dbdd" stroke="#909090"/><path d="M485 712L480 716.5L485 721" fill="none" stroke="#222" stroke-width="2"/>

<rect x="1236.5" y="709.5" width="42" height="14.5" rx="3" fill="#c9c9c9" stroke="#909090"/>
<text x="1246" y="721" style="font-family:'Liberation Mono',monospace;font-weight:bold;font-size:15px">386</text>
<rect x="1280.5" y="709.5" width="14" height="14.5" rx="2" fill="#d9dbdd" stroke="#909090"/><path d="M1285 712L1290 716.5L1285 721" fill="none" stroke="#222" stroke-width="2"/>

<rect x="1296" y="710" width="14" height="6" fill="#f0d070" opacity=".6"/>
<rect x="1296" y="720" width="9" height="4" fill="#f0a030"/>
<path d="M1296 720L1300 714L1302 719L1305 712L1307 718L1310 712" fill="none" stroke="#1090e0" stroke-width="1.2"/>
<rect x="1312" y="709" width="15" height="15.5" rx="2" fill="#e06060" stroke="#c03030"/><rect x="1314" y="711" width="11" height="11" rx="2" fill="#fff8d8"/><path d="M1319.5 712.5V717H1323" fill="none" stroke="#806020"/>
<g fill="none" stroke="#0030e0" stroke-width="1.3">
<rect x="1333" y="714" width="4" height="4"/>
<path d="M1329 710L1332 713M1342 710L1339 713M1329 723L1332 720M1342 723L1339 720"/>
<path d="M1331 713H1333V711M1340 713H1338V711M1331 720H1333V722M1340 720H1338V722" stroke-width="1"/>
<rect x="1348" y="712" width="8" height="8"/>
<path d="M1345 709L1348 712M1359 709L1356 712M1345 723L1348 720M1359 723L1356 720"/>
<path d="M1345 712V709H1348M1359 712V709H1356M1345 720V723H1348M1359 720V723H1356" stroke-width="1"/>
<path d="M1364 717C1366 712 1373 712 1373 717C1373 720 1371 722 1369 722"/>
</g>
<path d="M1361 718L1367 714V722Z" fill="#0030e0"/>
<rect x="1376" y="713" width="3" height="11" fill="#e02020"/><rect x="1380" y="716" width="3" height="8" fill="#f0c020"/><rect x="1384" y="719" width="3" height="5" fill="#20a020"/><rect x="1388" y="720" width="3" height="4" fill="#206060"/>
<path d="M1382 713L1385 716L1391 709" fill="none" stroke="#e01030" stroke-width="2"/>
<path d="M1398 713H1405V723H1393V713H1394" fill="none" stroke="#0050e0" stroke-width="1.3"/>
<path d="M1398 708V717M1394 712L1398 708L1400 711" fill="none" stroke="#0050e0" stroke-width="1.3"/>
</svg>
</body></html>
